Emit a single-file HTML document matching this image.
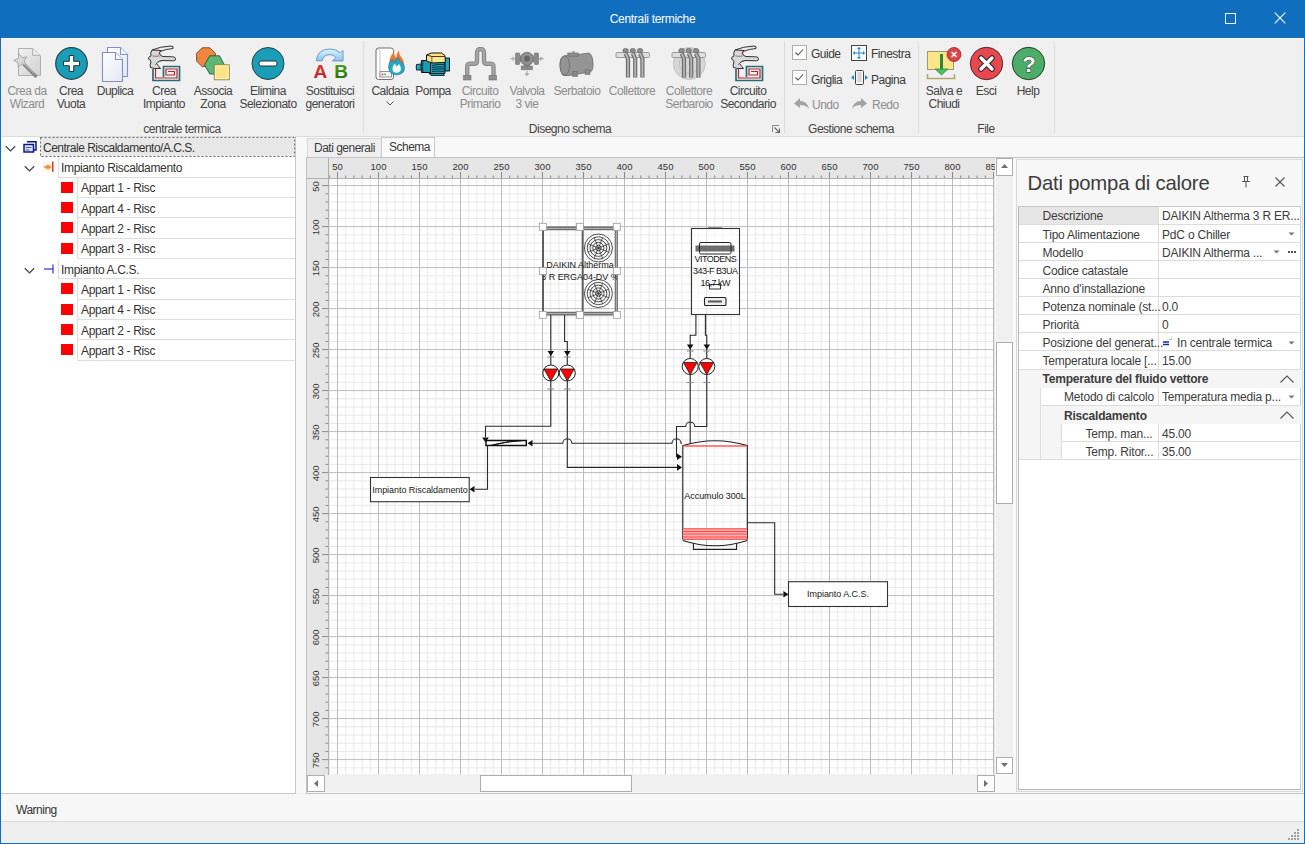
<!DOCTYPE html>
<html><head><meta charset="utf-8">
<style>
*{box-sizing:border-box;margin:0;padding:0}
html,body{width:1305px;height:844px;overflow:hidden;background:#f0f0f0;font-family:"Liberation Sans",sans-serif;font-size:11px;color:#333;position:relative}
.a{position:absolute}
svg{display:block}
.btn{position:absolute;text-align:center;font-size:12px;letter-spacing:-0.5px;line-height:13.4px;color:#444;white-space:nowrap;transform:translateX(-50%)}

.glab{position:absolute;font-size:12px;letter-spacing:-0.5px;line-height:13px;color:#444;transform:translateX(-50%);white-space:nowrap}
.sep{position:absolute;top:41px;width:1px;height:92px;background:#dcdcdc}
.t{position:absolute;white-space:nowrap;font-size:12px;letter-spacing:-0.5px;line-height:13px;color:#3b3b3b}
.dis{color:#8d8d8d !important}
</style></head><body>
<div class="a" style="left:0;top:0;width:1305px;height:38px;background:#0f6ebe"></div>
<div class="t" style="left:0;top:13px;width:1305px;text-align:center;color:#fff;letter-spacing:-0.3px">Centrali termiche</div>
<svg class="a" style="left:1225px;top:13px" width="12" height="11" viewBox="0 0 12 11"><rect x=".5" y=".5" width="10" height="10" fill="none" stroke="#fff" stroke-width="1"/></svg>
<svg class="a" style="left:1274px;top:12px" width="12" height="12" viewBox="0 0 12 12"><path d="M.7 .7l10.6 10.6M11.3 .7L.7 11.3" stroke="#fff" stroke-width="1.1"/></svg>
<div class="a" style="left:0;top:38px;width:1px;height:806px;background:#0f6ebe"></div>
<div class="a" style="left:1304px;top:38px;width:1px;height:806px;background:#0f6ebe"></div>
<div class="a" style="left:0;top:843px;width:1305px;height:1px;background:#0f6ebe"></div>
<!-- RIBBON -->
<div class="a" style="left:1px;top:38px;width:1303px;height:1px;background:#fafafa"></div>
<div class="a" style="left:1px;top:136px;width:1303px;height:1px;background:#dcdcdc"></div>
<div class="sep" style="left:363px"></div>
<div class="sep" style="left:784px"></div>
<div class="sep" style="left:918px"></div>
<div class="sep" style="left:1054px"></div>
<!-- icons group 1 -->
<svg class="a" style="left:11px;top:46px" width="32" height="34" viewBox="0 0 32 34">
 <defs><linearGradient id="gw" x1="0" y1="0" x2="1" y2="1"><stop offset="0" stop-color="#f2f2f2"/><stop offset="1" stop-color="#d0d0d0"/></linearGradient>
 <linearGradient id="gs" x1="0" y1="0" x2="1" y2="1"><stop offset="0" stop-color="#f0f0f0"/><stop offset="1" stop-color="#c4c4c4"/></linearGradient></defs>
 <path d="M7.5 2.5h14.5l7.5 7.5v19.5h-22z" fill="url(#gw)" stroke="#b0b0b0"/>
 <path d="M21.5 2.5v6.8h7.5" fill="#ececec" stroke="#b0b0b0"/>
 <path d="M13 18.5L24.5 30" stroke="#888" stroke-width="3.2" stroke-linecap="round"/>
 <path d="M14 18.5L23 27.5" stroke="#c8c8c8" stroke-width="1"/>
 <path d="M7.94 7.85L10.98 11.72L15.84 10.88L13.10 14.97L15.40 19.33L10.65 17.99L7.22 21.52L7.03 16.60L2.61 14.42L7.24 12.72z" fill="url(#gs)" stroke="#a8a8a8" stroke-width="1" stroke-linejoin="round"/>
</svg>
<svg class="a" style="left:55px;top:47px" width="33" height="33" viewBox="0 0 33 33">
 <circle cx="16.5" cy="16.5" r="15.8" fill="#1a9eb8" stroke="#25454b" stroke-width="1.2"/>
 <path d="M14.3 8.5h4.4v5.8h5.8v4.4h-5.8v5.8h-4.4v-5.8h-5.8v-4.4h5.8z" fill="#fff" stroke="#2b2f30" stroke-width="1"/>
</svg>
<svg class="a" style="left:96px;top:44px" width="40" height="38" viewBox="0 0 40 38">
 <defs><linearGradient id="gd" x1="0" y1="0" x2="1" y2="1"><stop offset="0" stop-color="#ffffff"/><stop offset="1" stop-color="#e2e7f3"/></linearGradient></defs>
 <path d="M11.5 3.5h13l7 7v22h-20z" fill="url(#gd)" stroke="#8690c0" stroke-width="1.1"/>
 <path d="M24.5 3.5v7h7" fill="#fafbff" stroke="#8690c0" stroke-width="1.1"/>
 <path d="M6.5 8.5h13l7 7v22h-20z" fill="url(#gd)" stroke="#8690c0" stroke-width="1.1"/>
 <path d="M19.5 8.5v7h7" fill="#fafbff" stroke="#8690c0" stroke-width="1.1"/>
</svg>
<svg class="a" style="left:145px;top:44px" width="40" height="40" viewBox="0 0 40 40">
 <path d="M7 6Q15 2.5 26 2Q29 2 28 4.5Q21 5 15 7.5" fill="#ececec" stroke="#1e1e1e" stroke-width="0.9"/>
 <path d="M7 6Q5 9 6 12Q3 13 3.5 15Q6 16 6 18Q4.5 21 5.5 23.5Q9 25 15.5 24.5Q13 21.5 11.5 19.5Q13 17 17 16.5L28.5 16.8Q31 16.5 30.5 14.5Q30 12.5 27.5 12.8L18 12.5Q15 12 14.5 9.5Q14.5 7.5 16 6.5Z" fill="#d9d9d9" stroke="#1e1e1e" stroke-width="0.9"/>
 <path d="M7.5 12Q11 12.5 14.5 12M10 21Q12 17.5 17 16.5" fill="none" stroke="#555" stroke-width="0.7"/>
 <circle cx="14.5" cy="9.5" r="0.9" fill="#d22"/>
 <path d="M8 25V36.5H34.5V22.5H18.5V33" fill="none" stroke="#2a6b78" stroke-width="1.7"/>
 <path d="M10.5 25V34H32V25H21V31H29.5V27.5H23" fill="none" stroke="#b0282e" stroke-width="1.2"/>
</svg>
<svg class="a" style="left:190px;top:44px" width="45" height="40" viewBox="0 0 45 40">
 <polygon points="25.42,17.10 19.90,22.62 12.10,22.62 6.58,17.10 6.58,9.30 12.10,3.78 19.90,3.78 25.42,9.30" fill="#f08640" stroke="#6a3a20" stroke-width=".8"/>
 <polygon points="19.8,11.8 29.5,11.8 34.3,20.8 29.5,30 19.8,30 14.5,20.8" fill="#5cb874" stroke="#1f5a30" stroke-width=".9"/>
 <rect x="24.3" y="20.8" width="15" height="15" fill="#fbe38a" stroke="#8a8460" stroke-width=".9"/>
 <rect x="25.5" y="22" width="12.6" height="12.6" fill="none" stroke="#fff7b0" stroke-width=".8"/>
</svg>
<svg class="a" style="left:251px;top:47px" width="34" height="34" viewBox="0 0 34 34">
 <circle cx="17" cy="16.5" r="16" fill="#1a9eb8" stroke="#2e3e42" stroke-width="1"/>
 <rect x="8" y="14" width="18" height="5" rx="2" fill="#fff" stroke="#2b2f30" stroke-width="1"/>
</svg>
<svg class="a" style="left:308px;top:44px" width="44" height="38" viewBox="0 0 44 38">
 <defs><linearGradient id="garr" x1="0" y1="0" x2="0" y2="1"><stop offset="0" stop-color="#def3fc"/><stop offset="1" stop-color="#8cc4ec"/></linearGradient>
 <linearGradient id="gA" x1="0" y1="0" x2="0" y2="1"><stop offset="0" stop-color="#e0463c"/><stop offset="1" stop-color="#b81c18"/></linearGradient>
 <linearGradient id="gB" x1="0" y1="0" x2="0" y2="1"><stop offset="0" stop-color="#56a818"/><stop offset="1" stop-color="#1e6a0a"/></linearGradient></defs>
 <path d="M8.3 16.8Q9.5 5 22 5Q28.5 5 32.3 8.8L35 6.5V17H24.5L27.8 13.6Q25.5 10.6 22 10.6Q15.5 10.6 14 16.8Z" fill="url(#garr)" stroke="#5b93d0" stroke-width=".9"/>
 <text x="12.3" y="33.5" text-anchor="middle" font-family="Liberation Sans" font-weight="bold" font-size="19" fill="url(#gA)">A</text>
 <text x="33" y="33.5" text-anchor="middle" font-family="Liberation Sans" font-weight="bold" font-size="19" fill="url(#gB)">B</text>
</svg>
<!-- labels group 1 -->
<div class="btn dis" style="left:27px;top:85px">Crea da<br>Wizard</div>
<div class="btn" style="left:71px;top:85px">Crea<br>Vuota</div>
<div class="btn" style="left:115px;top:85px">Duplica</div>
<div class="btn" style="left:164px;top:85px">Crea<br>Impianto</div>
<div class="btn" style="left:213px;top:85px">Associa<br>Zona</div>
<div class="btn" style="left:268px;top:85px">Elimina<br>Selezionato</div>
<div class="btn" style="left:330px;top:85px">Sostituisci<br>generatori</div>
<div class="glab" style="left:182px;top:122.6px">centrale termica</div>
<!-- group 2 icons -->
<svg class="a" style="left:372px;top:46px" width="34" height="36" viewBox="0 0 34 36">
 <path d="M4 4.5Q4 2 6.5 2H19Q21.5 2.3 21.5 4.5V31Q21.5 33.5 19 33.5H6.5Q4 33.5 4 31Z" fill="#fff" stroke="#707070" stroke-width="1"/>
 <path d="M5.5 3.5Q7 3 8 4.5V32" fill="none" stroke="#c8c8c8" stroke-width="1"/>
 <rect x="8" y="25.5" width="11.5" height="5.5" fill="#f2f2f2" stroke="#888" stroke-width=".9"/>
 <circle cx="10.5" cy="28.3" r=".9" fill="#e33"/><circle cx="13" cy="28.3" r=".9" fill="#3a3"/>
 <path d="M17.5 17Q17 11 22 6Q22 10 24.5 12Q24 8 27 4.5Q27 9 30 12Q32.5 15 32 19Q28 18 24 19Q20 18 17.5 17Z" fill="#f0772e"/>
 <path d="M16.5 21Q16.5 15.5 20.5 13Q21 16 23 17Q23 13.5 26 11Q27 15 29.5 16Q32.5 18 32.5 22.5Q32.5 28 24.5 29Q16.5 28 16.5 21Z" fill="#23a9c4" stroke="#1a6a7a" stroke-width=".5"/>
 <path d="M20.5 23Q20.5 19.5 23 17.5Q23.5 20 25 20.5Q25.5 19 27 18Q29 20.5 28.8 23.5Q28.5 26.5 24.5 26.8Q20.5 26.5 20.5 23Z" fill="#fff"/>
</svg>
<svg class="a" style="left:412px;top:48px" width="40" height="32" viewBox="0 0 40 32">
 <path d="M4.5 16.5Q4 19 4.5 22H9.5V16Z" fill="#1fa6c0" stroke="#111" stroke-width=".9"/>
 <path d="M9.5 12.5Q8.5 18.5 9.5 24.5H18.5V12.5Z" fill="#1c9db6" stroke="#111" stroke-width="1"/>
 <path d="M11 13Q10 18.5 11 24" fill="none" stroke="#0a3a44" stroke-width="1"/>
 <path d="M18.5 14.5H33V25.5H18.5Z" fill="#1e9fb8" stroke="#111" stroke-width="1"/>
 <path d="M20 17.5Q26 16 32 16.5M20 19.5Q26 18.5 32 19M20 21.5Q26 20.5 32 21M20 23.5Q26 22.5 32 23.5" fill="none" stroke="#0a3440" stroke-width="1"/>
 <path d="M33 10H37.5V23H33Z" fill="#1fa6c0" stroke="#111" stroke-width="1"/>
 <path d="M17 25.5L19 27.5H32.5L31 25.5Z" fill="#1c9db6" stroke="#111" stroke-width=".8"/>
 <path d="M14.5 7L19.5 5H29.5L33 7.5V14.5L20 15L14.5 13Z" fill="#fde283" stroke="#111" stroke-width="1"/>
 <path d="M14.5 7L20 8.5H33M20 8.5V15" fill="none" stroke="#111" stroke-width=".8"/>
 <path d="M20.5 9.5H32.5V14H20.5Z" fill="#fbe58d"/>
</svg>
<svg class="a" style="left:463px;top:47px" width="34" height="34" viewBox="0 0 34 34">
 <path d="M4.2 30V19.5c0-1.5 1-2.8 2.5-2.8H11.5c1.5 0 2.5-1 2.5-2.5V6c0-2.5 1.5-4 3.5-4s3.5 1.5 3.5 4v8.2c0 1.5 1 2.5 2.5 2.5h4.5c1.5 0 2.5 1.3 2.5 2.8v10.5" fill="none" stroke="#8a8a8a" stroke-width="4.4"/>
 <path d="M4.2 30V19.5c0-1.5 1-2.8 2.5-2.8H11.5c1.5 0 2.5-1 2.5-2.5V6c0-2.5 1.5-4 3.5-4s3.5 1.5 3.5 4v8.2c0 1.5 1 2.5 2.5 2.5h4.5c1.5 0 2.5 1.3 2.5 2.8v10.5" fill="none" stroke="#a6a6a6" stroke-width="2.2"/>
 <rect x=".5" y="28.5" width="7.5" height="4.5" fill="#8e8e8e" stroke="#6e6e6e" stroke-width=".6"/><rect x="26" y="28.5" width="7.5" height="4.5" fill="#8e8e8e" stroke="#6e6e6e" stroke-width=".6"/>
</svg>
<svg class="a" style="left:507px;top:44px" width="40" height="40" viewBox="0 0 40 40">
 <path d="M3 14.8h4M5.5 13l1.8 1.8-1.8 1.8M37 14.8h-4M34.5 13l-1.8 1.8 1.8 1.8M20 27v4M18.2 29.5l1.8 1.8 1.8-1.8" fill="none" stroke="#a6a6a6" stroke-width="1.1"/>
 <rect x="8.5" y="9" width="4.2" height="11.5" rx=".8" fill="#8a8a8a" stroke="#747474" stroke-width=".6"/>
 <rect x="27.3" y="9" width="4.2" height="11.5" rx=".8" fill="#8a8a8a" stroke="#747474" stroke-width=".6"/>
 <path d="M12.5 11.5h15v6.5h-15z" fill="#8a8a8a"/>
 <path d="M17 20.5h6v2h-6z" fill="#8a8a8a"/>
 <rect x="14.2" y="22" width="11.2" height="3.8" fill="#8a8a8a" stroke="#747474" stroke-width=".6"/>
 <circle cx="20" cy="14.8" r="6.6" fill="#8c8c8c" stroke="#747474" stroke-width=".8"/>
 <circle cx="20" cy="14.8" r="4.4" fill="none" stroke="#9a9a9a" stroke-width=".8"/>
 <circle cx="20" cy="14.8" r="3" fill="#666"/>
</svg>
<svg class="a" style="left:556px;top:46px" width="40" height="36" viewBox="0 0 40 36">
 <path d="M8 10Q11 9 13 9.5L22.5 8.5L33 7Q37 9 37 19Q37 25 34 26L25 27.5L13 29.5Q8 30 6.5 29Q4 25 4 19Q4 11 8 10Z" fill="#959595" stroke="#6a6a6a" stroke-width=".8"/>
 <ellipse cx="8.8" cy="19.5" rx="4.8" ry="9.5" fill="#939393" stroke="#6a6a6a" stroke-width=".8"/>
 <path d="M11.5 7H22.5V10.3H12.5Z" fill="#8e8e8e" stroke="#6a6a6a" stroke-width=".6"/><path d="M15.5 6.5L18 5L19 6.5" fill="#666"/>
 <path d="M16.5 25.5H21.5V30.5H16.5ZM29 23.5H34V28.5H29Z" fill="#8a8a8a" stroke="#6e6e6e" stroke-width=".6"/>
</svg>
<svg class="a" style="left:612px;top:46px" width="40" height="36" viewBox="0 0 40 36">
 <rect x="4" y="6.5" width="33.5" height="5" rx="1" fill="#dedede" stroke="#9a9a9a"/>
 <path d="M13.6 7.5L16.0 12.5V31.5" fill="none" stroke="#6e6e6e" stroke-width="4.2"/><path d="M13.6 7.5L16.0 12.5V31" fill="none" stroke="#b4b4b4" stroke-width="1.8"/>
 <ellipse cx="13.6" cy="4.6" rx="2.7" ry="2.2" fill="#8d8d8d" stroke="#666" stroke-width=".7"/>
 <path d="M20.8 7.5L23.2 12.5V31.5" fill="none" stroke="#6e6e6e" stroke-width="4.2"/><path d="M20.8 7.5L23.2 12.5V31" fill="none" stroke="#b4b4b4" stroke-width="1.8"/>
 <ellipse cx="20.8" cy="4.6" rx="2.7" ry="2.2" fill="#8d8d8d" stroke="#666" stroke-width=".7"/>
 <path d="M28 7.5L30.4 12.5V31.5" fill="none" stroke="#6e6e6e" stroke-width="4.2"/><path d="M28 7.5L30.4 12.5V31" fill="none" stroke="#b4b4b4" stroke-width="1.8"/>
 <ellipse cx="28" cy="4.6" rx="2.7" ry="2.2" fill="#8d8d8d" stroke="#666" stroke-width=".7"/>
</svg>
<svg class="a" style="left:668px;top:46px" width="40" height="36" viewBox="0 0 40 36">
 <circle cx="21.3" cy="17.5" r="16" fill="#d6d6d6" stroke="#c4c4c4"/><circle cx="21.3" cy="17.5" r="10" fill="none" stroke="#c0c0c0"/>
 <rect x="4" y="6.5" width="33.5" height="5" rx="1" fill="#dedede" stroke="#9a9a9a"/>
 <path d="M13.6 7.5L16.0 12.5V31.5" fill="none" stroke="#6e6e6e" stroke-width="4.2"/><path d="M13.6 7.5L16.0 12.5V31" fill="none" stroke="#b4b4b4" stroke-width="1.8"/>
 <ellipse cx="13.6" cy="4.6" rx="2.7" ry="2.2" fill="#8d8d8d" stroke="#666" stroke-width=".7"/>
 <path d="M20.8 7.5L23.2 12.5V31.5" fill="none" stroke="#6e6e6e" stroke-width="4.2"/><path d="M20.8 7.5L23.2 12.5V31" fill="none" stroke="#b4b4b4" stroke-width="1.8"/>
 <ellipse cx="20.8" cy="4.6" rx="2.7" ry="2.2" fill="#8d8d8d" stroke="#666" stroke-width=".7"/>
 <path d="M28 7.5L30.4 12.5V31.5" fill="none" stroke="#6e6e6e" stroke-width="4.2"/><path d="M28 7.5L30.4 12.5V31" fill="none" stroke="#b4b4b4" stroke-width="1.8"/>
 <ellipse cx="28" cy="4.6" rx="2.7" ry="2.2" fill="#8d8d8d" stroke="#666" stroke-width=".7"/>
</svg>
<svg class="a" style="left:728px;top:44px" width="40" height="40" viewBox="0 0 40 40">
 <path d="M7 6Q15 2.5 26 2Q29 2 28 4.5Q21 5 15 7.5" fill="#ececec" stroke="#1e1e1e" stroke-width="0.9"/>
 <path d="M7 6Q5 9 6 12Q3 13 3.5 15Q6 16 6 18Q4.5 21 5.5 23.5Q9 25 15.5 24.5Q13 21.5 11.5 19.5Q13 17 17 16.5L28.5 16.8Q31 16.5 30.5 14.5Q30 12.5 27.5 12.8L18 12.5Q15 12 14.5 9.5Q14.5 7.5 16 6.5Z" fill="#d9d9d9" stroke="#1e1e1e" stroke-width="0.9"/>
 <path d="M7.5 12Q11 12.5 14.5 12M10 21Q12 17.5 17 16.5" fill="none" stroke="#555" stroke-width="0.7"/>
 <circle cx="14.5" cy="9.5" r="0.9" fill="#d22"/>
 <path d="M8 25V36.5H34.5V22.5H18.5V33" fill="none" stroke="#2a6b78" stroke-width="1.7"/>
 <path d="M10.5 25V34H32V25H21V31H29.5V27.5H23" fill="none" stroke="#b0282e" stroke-width="1.2"/>
</svg>
<div class="btn" style="left:390px;top:85px">Caldaia</div>
<svg class="a" style="left:386px;top:100.5px" width="8" height="5" viewBox="0 0 8 5"><path d="M.5.5l3.5 3.5 3.5-3.5" fill="none" stroke="#555" stroke-width="1"/></svg>
<div class="btn" style="left:433px;top:85px">Pompa</div>
<div class="btn dis" style="left:480px;top:85px">Circuito<br>Primario</div>
<div class="btn dis" style="left:527px;top:85px">Valvola<br>3 vie</div>
<div class="btn dis" style="left:577px;top:85px">Serbatoio</div>
<div class="btn dis" style="left:632px;top:85px">Collettore</div>
<div class="btn dis" style="left:689px;top:85px">Collettore<br>Serbaroio</div>
<div class="btn" style="left:748px;top:85px">Circuito<br>Secondario</div>
<div class="glab" style="left:570px;top:122.6px">Disegno schema</div>
<svg class="a" style="left:772px;top:125px" width="8" height="8" viewBox="0 0 8 8"><path d="M.5 7V.5H7" fill="none" stroke="#8a8a8a"/><path d="M2.5 2.5l4.5 4.5M3.5 7.5h4v-4" fill="none" stroke="#666" stroke-width="1.1"/></svg>
<!-- group 3 -->
<svg class="a" style="left:792px;top:45px" width="15" height="15" viewBox="0 0 15 15"><rect x=".5" y=".5" width="14" height="14" fill="#fff" stroke="#adadad"/><path d="M3.5 7.5l2.5 2.5 5-5.5" fill="none" stroke="#555" stroke-width="1.1"/></svg>
<svg class="a" style="left:792px;top:70px" width="15" height="15" viewBox="0 0 15 15"><rect x=".5" y=".5" width="14" height="14" fill="#fff" stroke="#adadad"/><path d="M3.5 7.5l2.5 2.5 5-5.5" fill="none" stroke="#555" stroke-width="1.1"/></svg>
<svg class="a" style="left:794px;top:98px" width="15" height="12" viewBox="0 0 15 12"><path d="M0 5.5L6 0v3c5 0 8 3 9 8-2-3-5-4-9-4v3z" fill="#a3a3a3"/></svg>
<div class="t" style="left:811px;top:47.5px">Guide</div>
<div class="t" style="left:811px;top:73.5px">Griglia</div>
<div class="t dis" style="left:812px;top:98.5px">Undo</div>
<svg class="a" style="left:851px;top:45px" width="16" height="16" viewBox="0 0 16 16"><rect x=".5" y=".5" width="15" height="15" fill="#fafafa" stroke="#444"/>
<path d="M8 2.5v11M2.5 8h11" stroke="#1e88d8" stroke-width="1"/><path d="M8 2l-2 2h4zM8 14l-2-2h4zM2 8l2-2v4zM14 8l-2-2v4z" fill="#1e88d8"/></svg>
<svg class="a" style="left:851px;top:70px" width="17" height="16" viewBox="0 0 17 16"><rect x="4.5" y=".5" width="8" height="14" rx="1" fill="#f4f4f4" stroke="#444"/>
<path d="M6.5 3h4M6.5 5h4M6.5 7h4M6.5 9h4M6.5 11h4" stroke="#aaa" stroke-width=".8"/><path d="M0 7.5l3-2.5v5zM17 7.5l-3-2.5v5z" fill="#1e88d8"/></svg>
<svg class="a" style="left:852px;top:98px" width="15" height="12" viewBox="0 0 15 12"><path d="M15 5.5L9 0v3C4 3 1 6 0 11c2-3 5-4 9-4v3z" fill="#a3a3a3"/></svg>
<div class="t" style="left:871px;top:47.5px">Finestra</div>
<div class="t" style="left:871px;top:73.5px">Pagina</div>
<div class="t dis" style="left:872px;top:98.5px">Redo</div>
<div class="glab" style="left:851px;top:122.6px">Gestione schema</div>
<!-- group 4 -->
<svg class="a" style="left:926px;top:46px" width="36" height="35" viewBox="0 0 36 35">
 <rect x="1.5" y="5.5" width="26" height="18" fill="#fde68a" stroke="#9a9a6a"/>
 <path d="M1.5 28v4.5h27V28" fill="none" stroke="#b0a870" stroke-width="1.6"/>
 <rect x="14" y="8" width="3" height="17" fill="#2e8a3a"/>
 <path d="M9 23h13l-6.5 6z" fill="#4cc06a" stroke="#2e8a3a" stroke-width=".8"/>
 <circle cx="28" cy="8.5" r="7" fill="#e0434a" stroke="#8a2a2a" stroke-width=".8"/>
 <path d="M25.5 6l5 5M30.5 6l-5 5" stroke="#fff" stroke-width="1.6"/>
</svg>
<svg class="a" style="left:969px;top:46px" width="35" height="35" viewBox="0 0 35 35">
 <circle cx="17.5" cy="17.5" r="16.2" fill="#e8474f" stroke="#4a2a2a" stroke-width="1"/>
 <path d="M12 12l11 11M23 12L12 23" stroke="#2a2a2a" stroke-width="5.6" stroke-linecap="round"/>
 <path d="M12 12l11 11M23 12L12 23" stroke="#fff" stroke-width="3.4" stroke-linecap="round"/>
</svg>
<svg class="a" style="left:1011px;top:46px" width="35" height="35" viewBox="0 0 35 35">
 <circle cx="17.5" cy="17.5" r="16.2" fill="#4cad69" stroke="#2a3a2a" stroke-width="1"/>
 <text x="18" y="26" text-anchor="middle" font-family="Liberation Sans" font-weight="bold" font-size="22" fill="#fff" stroke="#333" stroke-width="1" paint-order="stroke">?</text>
</svg>
<div class="btn" style="left:944px;top:85px">Salva e<br>Chiudi</div>
<div class="btn" style="left:986px;top:85px">Esci</div>
<div class="btn" style="left:1028px;top:85px">Help</div>
<div class="glab" style="left:986px;top:122.6px">File</div>
<!-- TREE -->
<div class="a" style="left:1px;top:137px;width:294px;height:656px;background:#fff"></div>
<div class="a" style="left:295px;top:137px;width:1px;height:657px;background:#c8c8c8"></div>
<div class="a" style="left:1px;top:793px;width:295px;height:1px;background:#c8c8c8"></div>
<svg class="a" style="left:40px;top:137px" width="255" height="20" viewBox="0 0 255 20"><rect x=".5" y=".5" width="254" height="19" fill="#e8e8e8" stroke="#6a6a6a" stroke-width="1" stroke-dasharray="2 2"/></svg>
<svg class="a" style="left:5px;top:144.5px" width="11" height="8" viewBox="0 0 11 8"><path d="M.8 1.2l4.7 4.7 4.7-4.7" fill="none" stroke="#444" stroke-width="1.3"/></svg>
<svg class="a" style="left:23px;top:141px" width="14" height="13" viewBox="0 0 14 13"><path d="M4 .8h9v8.2h-2" fill="none" stroke="#0c1a80" stroke-width="1.5"/><rect x="1" y="3.5" width="9.5" height="7.5" fill="#dfe8f8" stroke="#0c1a80" stroke-width="1.5"/><path d="M2.5 6.5h6M2.5 9h4" stroke="#3a5ab8" stroke-width="1.2"/></svg>
<div class="t" style="left:43px;top:141.5px;color:#333;letter-spacing:-0.5px">Centrale Riscaldamento/A.C.S.</div>
<div class="a" style="left:58px;top:176.7px;width:237px;height:1px;background:#dedede"></div>
<div class="a" style="left:58px;top:157.3px;width:1px;height:20.33px;background:#dedede"></div>
<svg class="a" style="left:24px;top:164.8px" width="11" height="8" viewBox="0 0 11 8"><path d="M.8 1.2l4.7 4.7 4.7-4.7" fill="none" stroke="#444" stroke-width="1.3"/></svg>
<svg class="a" style="left:43px;top:161.3px" width="12" height="12" viewBox="0 0 12 12"><circle cx="5" cy="6" r="2.6" fill="#f7b52a"/><path d="M5 1.5v1M5 9.5v1M1 3l.8.8M9 3l-.8.8M1 9l.8-.8M9 9l-.8-.8" stroke="#f5c060" stroke-width=".8"/><path d="M.5 6h8" stroke="#f06060" stroke-width="1"/><path d="M9.8 .5v10.5" stroke="#f01010" stroke-width="1.3"/></svg>
<div class="t" style="left:61px;top:161.8px;color:#333;letter-spacing:-0.35px">Impianto Riscaldamento</div>
<div class="a" style="left:77px;top:197.0px;width:218px;height:1px;background:#dedede"></div>
<div class="a" style="left:77px;top:177.7px;width:1px;height:20.33px;background:#dedede"></div>
<div class="a" style="left:61px;top:181.7px;width:12px;height:11px;background:#ff0000"></div>
<div class="t" style="left:81px;top:182.2px;color:#333;letter-spacing:-0.35px">Appart 1 - Risc</div>
<div class="a" style="left:77px;top:217.3px;width:218px;height:1px;background:#dedede"></div>
<div class="a" style="left:77px;top:198.0px;width:1px;height:20.33px;background:#dedede"></div>
<div class="a" style="left:61px;top:202.0px;width:12px;height:11px;background:#ff0000"></div>
<div class="t" style="left:81px;top:202.5px;color:#333;letter-spacing:-0.35px">Appart 4 - Risc</div>
<div class="a" style="left:77px;top:237.6px;width:218px;height:1px;background:#dedede"></div>
<div class="a" style="left:77px;top:218.3px;width:1px;height:20.33px;background:#dedede"></div>
<div class="a" style="left:61px;top:222.3px;width:12px;height:11px;background:#ff0000"></div>
<div class="t" style="left:81px;top:222.8px;color:#333;letter-spacing:-0.35px">Appart 2 - Risc</div>
<div class="a" style="left:77px;top:258.0px;width:218px;height:1px;background:#dedede"></div>
<div class="a" style="left:77px;top:238.6px;width:1px;height:20.33px;background:#dedede"></div>
<div class="a" style="left:61px;top:242.6px;width:12px;height:11px;background:#ff0000"></div>
<div class="t" style="left:81px;top:243.1px;color:#333;letter-spacing:-0.35px">Appart 3 - Risc</div>
<div class="a" style="left:58px;top:278.3px;width:237px;height:1px;background:#dedede"></div>
<div class="a" style="left:58px;top:259.0px;width:1px;height:20.33px;background:#dedede"></div>
<svg class="a" style="left:24px;top:266.5px" width="11" height="8" viewBox="0 0 11 8"><path d="M.8 1.2l4.7 4.7 4.7-4.7" fill="none" stroke="#444" stroke-width="1.3"/></svg>
<svg class="a" style="left:43px;top:263.0px" width="12" height="12" viewBox="0 0 12 12"><path d="M1 6h9" stroke="#3030e0" stroke-width="1.2"/><path d="M10 1.5v9" stroke="#3030e0" stroke-width="1.2"/></svg>
<div class="t" style="left:61px;top:263.5px;color:#333;letter-spacing:-0.35px">Impianto A.C.S.</div>
<div class="a" style="left:77px;top:298.6px;width:218px;height:1px;background:#dedede"></div>
<div class="a" style="left:77px;top:279.3px;width:1px;height:20.33px;background:#dedede"></div>
<div class="a" style="left:61px;top:283.3px;width:12px;height:11px;background:#ff0000"></div>
<div class="t" style="left:81px;top:283.8px;color:#333;letter-spacing:-0.35px">Appart 1 - Risc</div>
<div class="a" style="left:77px;top:319.0px;width:218px;height:1px;background:#dedede"></div>
<div class="a" style="left:77px;top:299.6px;width:1px;height:20.33px;background:#dedede"></div>
<div class="a" style="left:61px;top:303.6px;width:12px;height:11px;background:#ff0000"></div>
<div class="t" style="left:81px;top:304.1px;color:#333;letter-spacing:-0.35px">Appart 4 - Risc</div>
<div class="a" style="left:77px;top:339.3px;width:218px;height:1px;background:#dedede"></div>
<div class="a" style="left:77px;top:320.0px;width:1px;height:20.33px;background:#dedede"></div>
<div class="a" style="left:61px;top:324.0px;width:12px;height:11px;background:#ff0000"></div>
<div class="t" style="left:81px;top:324.5px;color:#333;letter-spacing:-0.35px">Appart 2 - Risc</div>
<div class="a" style="left:77px;top:359.6px;width:218px;height:1px;background:#dedede"></div>
<div class="a" style="left:77px;top:340.3px;width:1px;height:20.33px;background:#dedede"></div>
<div class="a" style="left:61px;top:344.3px;width:12px;height:11px;background:#ff0000"></div>
<div class="t" style="left:81px;top:344.8px;color:#333;letter-spacing:-0.35px">Appart 3 - Risc</div>
<!-- MID -->
<div class="a" style="left:296px;top:137px;width:1008px;height:656px;background:#f8f8f8"></div>
<div class="a" style="left:307px;top:138px;width:75px;height:20px;background:#efefef;border:1px solid #d9d9d9;border-bottom:none"></div>
<div class="t" style="left:314px;top:142px;color:#3b3b3b">Dati generali</div>
<div class="a" style="left:381px;top:137px;width:54px;height:21px;background:#fafafa;border:1px solid #c9c9c9;border-bottom:none"></div>
<div class="t" style="left:389px;top:141px;color:#3b3b3b">Schema</div>
<div class="a" style="left:306px;top:157px;width:998px;height:637px;border:1px solid #c4c4c4;border-right:none;background:#f8f8f8"></div>
<div class="a" style="left:996px;top:176px;width:17px;height:581px;background:#f0f0f0"></div>
<div class="a" style="left:307px;top:775px;width:688px;height:17px;background:#f0f0f0"></div>
<svg class="a" style="left:307px;top:158px" width="688" height="617" viewBox="307 158 688 617">
<rect x="307" y="158" width="688" height="617" fill="#e6e6e6"/>
<rect x="328.5" y="178.5" width="665.5" height="596.0" fill="#fff"/>
<path d="M329.30 178.5V774.5M345.70 178.5V774.5M353.90 178.5V774.5M362.10 178.5V774.5M370.30 178.5V774.5M386.70 178.5V774.5M394.90 178.5V774.5M403.10 178.5V774.5M411.30 178.5V774.5M427.70 178.5V774.5M435.90 178.5V774.5M444.10 178.5V774.5M452.30 178.5V774.5M468.70 178.5V774.5M476.90 178.5V774.5M485.10 178.5V774.5M493.30 178.5V774.5M509.70 178.5V774.5M517.90 178.5V774.5M526.10 178.5V774.5M534.30 178.5V774.5M550.70 178.5V774.5M558.90 178.5V774.5M567.10 178.5V774.5M575.30 178.5V774.5M591.70 178.5V774.5M599.90 178.5V774.5M608.10 178.5V774.5M616.30 178.5V774.5M632.70 178.5V774.5M640.90 178.5V774.5M649.10 178.5V774.5M657.30 178.5V774.5M673.70 178.5V774.5M681.90 178.5V774.5M690.10 178.5V774.5M698.30 178.5V774.5M714.70 178.5V774.5M722.90 178.5V774.5M731.10 178.5V774.5M739.30 178.5V774.5M755.70 178.5V774.5M763.90 178.5V774.5M772.10 178.5V774.5M780.30 178.5V774.5M796.70 178.5V774.5M804.90 178.5V774.5M813.10 178.5V774.5M821.30 178.5V774.5M837.70 178.5V774.5M845.90 178.5V774.5M854.10 178.5V774.5M862.30 178.5V774.5M878.70 178.5V774.5M886.90 178.5V774.5M895.10 178.5V774.5M903.30 178.5V774.5M919.70 178.5V774.5M927.90 178.5V774.5M936.10 178.5V774.5M944.30 178.5V774.5M960.70 178.5V774.5M968.90 178.5V774.5M977.10 178.5V774.5M985.30 178.5V774.5M328.5 193.80H994M328.5 202.00H994M328.5 210.20H994M328.5 218.40H994M328.5 234.80H994M328.5 243.00H994M328.5 251.20H994M328.5 259.40H994M328.5 275.80H994M328.5 284.00H994M328.5 292.20H994M328.5 300.40H994M328.5 316.80H994M328.5 325.00H994M328.5 333.20H994M328.5 341.40H994M328.5 357.80H994M328.5 366.00H994M328.5 374.20H994M328.5 382.40H994M328.5 398.80H994M328.5 407.00H994M328.5 415.20H994M328.5 423.40H994M328.5 439.80H994M328.5 448.00H994M328.5 456.20H994M328.5 464.40H994M328.5 480.80H994M328.5 489.00H994M328.5 497.20H994M328.5 505.40H994M328.5 521.80H994M328.5 530.00H994M328.5 538.20H994M328.5 546.40H994M328.5 562.80H994M328.5 571.00H994M328.5 579.20H994M328.5 587.40H994M328.5 603.80H994M328.5 612.00H994M328.5 620.20H994M328.5 628.40H994M328.5 644.80H994M328.5 653.00H994M328.5 661.20H994M328.5 669.40H994M328.5 685.80H994M328.5 694.00H994M328.5 702.20H994M328.5 710.40H994M328.5 726.80H994M328.5 735.00H994M328.5 743.20H994M328.5 751.40H994M328.5 767.80H994" stroke="#e8e8e8" stroke-width="1" fill="none"/>
<path d="M337.50 178.5V774.5M378.50 178.5V774.5M419.50 178.5V774.5M460.50 178.5V774.5M501.50 178.5V774.5M542.50 178.5V774.5M583.50 178.5V774.5M624.50 178.5V774.5M665.50 178.5V774.5M706.50 178.5V774.5M747.50 178.5V774.5M788.50 178.5V774.5M829.50 178.5V774.5M870.50 178.5V774.5M911.50 178.5V774.5M952.50 178.5V774.5M993.50 178.5V774.5M328.5 185.60H994M328.5 226.60H994M328.5 267.60H994M328.5 308.60H994M328.5 349.60H994M328.5 390.60H994M328.5 431.60H994M328.5 472.60H994M328.5 513.60H994M328.5 554.60H994M328.5 595.60H994M328.5 636.60H994M328.5 677.60H994M328.5 718.60H994M328.5 759.60H994" stroke="#bcbcbc" stroke-width="1" fill="none"/>
<path d="M329.30 175.5V178M337.50 172V178M345.70 175.5V178M353.90 175.5V178M362.10 175.5V178M370.30 175.5V178M378.50 172V178M386.70 175.5V178M394.90 175.5V178M403.10 175.5V178M411.30 175.5V178M419.50 172V178M427.70 175.5V178M435.90 175.5V178M444.10 175.5V178M452.30 175.5V178M460.50 172V178M468.70 175.5V178M476.90 175.5V178M485.10 175.5V178M493.30 175.5V178M501.50 172V178M509.70 175.5V178M517.90 175.5V178M526.10 175.5V178M534.30 175.5V178M542.50 172V178M550.70 175.5V178M558.90 175.5V178M567.10 175.5V178M575.30 175.5V178M583.50 172V178M591.70 175.5V178M599.90 175.5V178M608.10 175.5V178M616.30 175.5V178M624.50 172V178M632.70 175.5V178M640.90 175.5V178M649.10 175.5V178M657.30 175.5V178M665.50 172V178M673.70 175.5V178M681.90 175.5V178M690.10 175.5V178M698.30 175.5V178M706.50 172V178M714.70 175.5V178M722.90 175.5V178M731.10 175.5V178M739.30 175.5V178M747.50 172V178M755.70 175.5V178M763.90 175.5V178M772.10 175.5V178M780.30 175.5V178M788.50 172V178M796.70 175.5V178M804.90 175.5V178M813.10 175.5V178M821.30 175.5V178M829.50 172V178M837.70 175.5V178M845.90 175.5V178M854.10 175.5V178M862.30 175.5V178M870.50 172V178M878.70 175.5V178M886.90 175.5V178M895.10 175.5V178M903.30 175.5V178M911.50 172V178M919.70 175.5V178M927.90 175.5V178M936.10 175.5V178M944.30 175.5V178M952.50 172V178M960.70 175.5V178M968.90 175.5V178M977.10 175.5V178M985.30 175.5V178M993.50 172V178M322 185.60H328M325.5 193.80H328M325.5 202.00H328M325.5 210.20H328M325.5 218.40H328M322 226.60H328M325.5 234.80H328M325.5 243.00H328M325.5 251.20H328M325.5 259.40H328M322 267.60H328M325.5 275.80H328M325.5 284.00H328M325.5 292.20H328M325.5 300.40H328M322 308.60H328M325.5 316.80H328M325.5 325.00H328M325.5 333.20H328M325.5 341.40H328M322 349.60H328M325.5 357.80H328M325.5 366.00H328M325.5 374.20H328M325.5 382.40H328M322 390.60H328M325.5 398.80H328M325.5 407.00H328M325.5 415.20H328M325.5 423.40H328M322 431.60H328M325.5 439.80H328M325.5 448.00H328M325.5 456.20H328M325.5 464.40H328M322 472.60H328M325.5 480.80H328M325.5 489.00H328M325.5 497.20H328M325.5 505.40H328M322 513.60H328M325.5 521.80H328M325.5 530.00H328M325.5 538.20H328M325.5 546.40H328M322 554.60H328M325.5 562.80H328M325.5 571.00H328M325.5 579.20H328M325.5 587.40H328M322 595.60H328M325.5 603.80H328M325.5 612.00H328M325.5 620.20H328M325.5 628.40H328M322 636.60H328M325.5 644.80H328M325.5 653.00H328M325.5 661.20H328M325.5 669.40H328M322 677.60H328M325.5 685.80H328M325.5 694.00H328M325.5 702.20H328M325.5 710.40H328M322 718.60H328M325.5 726.80H328M325.5 735.00H328M325.5 743.20H328M325.5 751.40H328M322 759.60H328M325.5 767.80H328" stroke="#8a8a8a" stroke-width="1" fill="none"/>
<path d="M307 178.5H994M328.5 158V775" stroke="#b0b0b0" stroke-width="1"/>
<g font-family="Liberation Sans" font-size="9.5" fill="#333"><text x="337.50" y="170" text-anchor="middle">50</text><text x="378.50" y="170" text-anchor="middle">100</text><text x="419.50" y="170" text-anchor="middle">150</text><text x="460.50" y="170" text-anchor="middle">200</text><text x="501.50" y="170" text-anchor="middle">250</text><text x="542.50" y="170" text-anchor="middle">300</text><text x="583.50" y="170" text-anchor="middle">350</text><text x="624.50" y="170" text-anchor="middle">400</text><text x="665.50" y="170" text-anchor="middle">450</text><text x="706.50" y="170" text-anchor="middle">500</text><text x="747.50" y="170" text-anchor="middle">550</text><text x="788.50" y="170" text-anchor="middle">600</text><text x="829.50" y="170" text-anchor="middle">650</text><text x="870.50" y="170" text-anchor="middle">700</text><text x="911.50" y="170" text-anchor="middle">750</text><text x="952.50" y="170" text-anchor="middle">800</text><text x="993.50" y="170" text-anchor="middle">850</text><text x="0" y="0" transform="translate(319.2 186.40) rotate(-90)" text-anchor="middle">50</text><text x="0" y="0" transform="translate(319.2 227.40) rotate(-90)" text-anchor="middle">100</text><text x="0" y="0" transform="translate(319.2 268.40) rotate(-90)" text-anchor="middle">150</text><text x="0" y="0" transform="translate(319.2 309.40) rotate(-90)" text-anchor="middle">200</text><text x="0" y="0" transform="translate(319.2 350.40) rotate(-90)" text-anchor="middle">250</text><text x="0" y="0" transform="translate(319.2 391.40) rotate(-90)" text-anchor="middle">300</text><text x="0" y="0" transform="translate(319.2 432.40) rotate(-90)" text-anchor="middle">350</text><text x="0" y="0" transform="translate(319.2 473.40) rotate(-90)" text-anchor="middle">400</text><text x="0" y="0" transform="translate(319.2 514.40) rotate(-90)" text-anchor="middle">450</text><text x="0" y="0" transform="translate(319.2 555.40) rotate(-90)" text-anchor="middle">500</text><text x="0" y="0" transform="translate(319.2 596.40) rotate(-90)" text-anchor="middle">550</text><text x="0" y="0" transform="translate(319.2 637.40) rotate(-90)" text-anchor="middle">600</text><text x="0" y="0" transform="translate(319.2 678.40) rotate(-90)" text-anchor="middle">650</text><text x="0" y="0" transform="translate(319.2 719.40) rotate(-90)" text-anchor="middle">700</text><text x="0" y="0" transform="translate(319.2 760.40) rotate(-90)" text-anchor="middle">750</text></g>
<!--DIAGRAM-->
<defs><clipPath id="gc"><rect x="328.5" y="178.5" width="665.5" height="596"/></clipPath></defs>
<g clip-path="url(#gc)">
<g fill="none">
<rect x="543" y="227" width="74" height="88" fill="rgba(255,255,255,0)"/>
<path d="M543 228V314" stroke="#5e5e5e" stroke-width="2"/>
<path d="M582.6 228V314" stroke="#5e5e5e" stroke-width="1.8"/>
<path d="M616.3 228V314" stroke="#6a6a6a" stroke-width="3.2"/><path d="M616.3 230V312" stroke="#d0d0d0" stroke-width="0.8"/>
<path d="M543 228.4H617M543 313.6H617" stroke="#6e6e6e" stroke-width="3.6"/><path d="M546 228.4H614M546 313.6H614" stroke="#c8c8c8" stroke-width="0.8"/>
<circle cx="598.4" cy="248" r="14" stroke="#222" stroke-width="0.8"/>
<circle cx="598.4" cy="248" r="11.2" stroke="#222" stroke-width="0.8"/>
<circle cx="598.4" cy="248" r="8.4" stroke="#222" stroke-width="0.8"/>
<circle cx="598.4" cy="248" r="5.6" stroke="#222" stroke-width="0.8"/>
<circle cx="598.4" cy="248" r="2.8" stroke="#222" stroke-width="0.8"/>
<path d="M598.40 248.00L608.75 252.29M598.40 248.00L602.69 258.35M598.40 248.00L594.11 258.35M598.40 248.00L588.05 252.29M598.40 248.00L588.05 243.71M598.40 248.00L594.11 237.65M598.40 248.00L602.69 237.65M598.40 248.00L608.75 243.71" stroke="#222" stroke-width="0.7"/>
<circle cx="598.4" cy="293.5" r="14" stroke="#222" stroke-width="0.8"/>
<circle cx="598.4" cy="293.5" r="11.2" stroke="#222" stroke-width="0.8"/>
<circle cx="598.4" cy="293.5" r="8.4" stroke="#222" stroke-width="0.8"/>
<circle cx="598.4" cy="293.5" r="5.6" stroke="#222" stroke-width="0.8"/>
<circle cx="598.4" cy="293.5" r="2.8" stroke="#222" stroke-width="0.8"/>
<path d="M598.40 293.50L608.75 297.79M598.40 293.50L602.69 303.85M598.40 293.50L594.11 303.85M598.40 293.50L588.05 297.79M598.40 293.50L588.05 289.21M598.40 293.50L594.11 283.15M598.40 293.50L602.69 283.15M598.40 293.50L608.75 289.21" stroke="#222" stroke-width="0.7"/>
</g>
<clipPath id="dk"><rect x="543" y="227" width="74" height="88"/></clipPath><g clip-path="url(#dk)" font-family="Liberation Sans" font-size="9" letter-spacing="-0.05" fill="#202020" text-anchor="middle"><text x="580" y="267.5">DAIKIN Altherma</text><text x="580" y="280">3 R ERGA04-DV %</text></g>
<rect x="539.3" y="223.3" width="7" height="7" fill="#fff" stroke="#9a9a9a" stroke-width="0.8"/>
<rect x="539.3" y="267.5" width="7" height="7" fill="#fff" stroke="#9a9a9a" stroke-width="0.8"/>
<rect x="539.3" y="311.3" width="7" height="7" fill="#fff" stroke="#9a9a9a" stroke-width="0.8"/>
<rect x="576.5" y="223.3" width="7" height="7" fill="#fff" stroke="#9a9a9a" stroke-width="0.8"/>
<rect x="576.5" y="311.3" width="7" height="7" fill="#fff" stroke="#9a9a9a" stroke-width="0.8"/>
<rect x="613.3" y="223.3" width="7" height="7" fill="#fff" stroke="#9a9a9a" stroke-width="0.8"/>
<rect x="613.3" y="267.5" width="7" height="7" fill="#fff" stroke="#9a9a9a" stroke-width="0.8"/>
<rect x="613.3" y="311.3" width="7" height="7" fill="#fff" stroke="#9a9a9a" stroke-width="0.8"/>
<rect x="691.5" y="228.5" width="48" height="86" fill="#fff" fill-opacity="0.6" stroke="#333" stroke-width="1.1"/>
<path d="M708 228.3H722" stroke="#333" stroke-width="1.6"/>
<rect x="695.5" y="245.5" width="39" height="6" fill="#6e6e6e"/>
<rect x="699.5" y="242.5" width="31.5" height="11.5" rx="1.5" fill="none" stroke="#222" stroke-width="1"/>
<rect x="709.5" y="284.5" width="11" height="4.5" fill="#fff" stroke="#333" stroke-width="1"/>
<rect x="704.5" y="297.5" width="21.5" height="8" rx="1" fill="#eee" stroke="#222" stroke-width="1.1"/><path d="M708 301.5h14" stroke="#555" stroke-width="2"/>
<g font-family="Liberation Sans" font-size="9" letter-spacing="-0.5" fill="#202020" text-anchor="middle"><text x="715.3" y="261.5">VITODENS</text><text x="715.3" y="273.5">343-F B3UA</text><text x="715.3" y="285.5">16,7 kW</text></g>
<path d="M550.8 315V343M550.8 343V365M550.8 381V426.2H485.5V437M564.6 315V341.5H567.3V365M567.3 381V467.4H677M695.9 315V335.2H690.2V358.5M690.2 374.5V443M705.4 315V335.2H706.8V358.5M706.8 374.5V426.5H694.7A4.5 4.5 0 0 0 685.7 426.5H676.5V456.8H677M532 443.2H562.8A4.5 4.5 0 0 1 571.8 443.2H672.0A4.5 4.5 0 0 1 681.0 443.2H682M487.5 445.5V489.3H475M747.5 522.7H774.7V594.2H783" stroke="#2a2a2a" stroke-width="1.1" fill="none"/>
<path d="M547.5 351.0H554.0999999999999L550.8 356.0zM564.0 351.0H570.5999999999999L567.3 356.0zM686.9000000000001 344.5H693.5L690.2 349.5zM703.5 344.5H710.0999999999999L706.8 349.5zM482.2 437.5H488.8L485.5 442.5zM677 453.5V460.1L682 456.8zM677 464.09999999999997V470.7L682 467.4zM783.4 590.9000000000001V597.5L788.4 594.2zM532.5 439.9V446.5L527.5 443.2zM474.5 486.0V492.6L469.5 489.3z" fill="#111"/>
<path d="M547.3 357H554.3M563.8 357H570.8M686.7 351H693.7M703.3 351H710.3M547.3 389H554.3M563.8 389H570.8M686.7 382.5H693.7M703.3 382.5H710.3" stroke="#8a8a8a" stroke-width="1"/>
<circle cx="550.8" cy="373" r="8" fill="#fff" stroke="#222" stroke-width="1"/>
<path d="M543.9 369H557.6999999999999L550.8 381z" fill="#f00" stroke="#222" stroke-width="0.8"/>
<circle cx="567.3" cy="373" r="8" fill="#fff" stroke="#222" stroke-width="1"/>
<path d="M560.4 369H574.1999999999999L567.3 381z" fill="#f00" stroke="#222" stroke-width="0.8"/>
<circle cx="690.2" cy="366.5" r="8" fill="#fff" stroke="#222" stroke-width="1"/>
<path d="M683.3000000000001 362.5H697.1L690.2 374.5z" fill="#f00" stroke="#222" stroke-width="0.8"/>
<circle cx="706.8" cy="366.5" r="8" fill="#fff" stroke="#222" stroke-width="1"/>
<path d="M699.9 362.5H713.6999999999999L706.8 374.5z" fill="#f00" stroke="#222" stroke-width="0.8"/>
<rect x="486" y="440.5" width="40.3" height="5" fill="#fff" stroke="#111" stroke-width="1.5"/>
<path d="M490 445.5C500 443 512 441 522 440.5M492 445.5C505 442 515 441 524 440.5" stroke="#111" stroke-width="1" fill="none"/>
<path d="M682.8 539.5V445.6Q715 436 747.3 445.6V539.5" fill="#fff" fill-opacity="0.3" stroke="#222" stroke-width="1.1"/>
<path d="M683.3 446H746.8" stroke="#ff5a5a" stroke-width="1.3"/>
<rect x="683" y="528.3" width="64" height="11.5" fill="#ffb0b0"/>
<path d="M683 528.8H747M683 531.5H747M683 534H747M683 537H747M683 539.3H747" stroke="#ff3a3a" stroke-width="0.9"/>
<path d="M682.8 540.5Q715 551 747.3 540.5" fill="none" stroke="#222" stroke-width="1.1"/>
<path d="M693.4 543.3V549.4H736.6V543.3" fill="none" stroke="#222" stroke-width="1.1"/>
<text x="715" y="498.5" font-family="Liberation Sans" font-size="9" letter-spacing="-0.05" fill="#202020" text-anchor="middle">Accumulo 300L</text>
<rect x="370.5" y="477.5" width="98.7" height="24.2" fill="#fff" stroke="#333" stroke-width="1.1"/>
<text x="420" y="492.5" font-family="Liberation Sans" font-size="9" letter-spacing="-0.05" fill="#202020" text-anchor="middle">Impianto Riscaldamento</text>
<rect x="788.5" y="581.7" width="99" height="24.8" fill="#fff" stroke="#333" stroke-width="1.1"/>
<text x="838" y="596.8" font-family="Liberation Sans" font-size="9" letter-spacing="-0.05" fill="#202020" text-anchor="middle">Impianto A.C.S.</text>
</g>
</svg>
<div class="a" style="left:996px;top:158px;width:17px;height:18px;background:#fff;border:1px solid #adadad"></div>
<svg class="a" style="left:1001px;top:164px" width="7" height="4" viewBox="0 0 7 4"><path d="M0 4L3.5 0 7 4z" fill="#707070"/></svg>
<div class="a" style="left:996px;top:757px;width:17px;height:17px;background:#fff;border:1px solid #adadad"></div>
<svg class="a" style="left:1001px;top:763px" width="7" height="4" viewBox="0 0 7 4"><path d="M0 0L3.5 4 7 0z" fill="#707070"/></svg>
<div class="a" style="left:996px;top:342px;width:17px;height:162px;background:#fff;border:1px solid #adadad"></div>
<div class="a" style="left:307px;top:775px;width:18px;height:17px;background:#fff;border:1px solid #adadad"></div>
<svg class="a" style="left:314px;top:780px" width="4" height="7" viewBox="0 0 4 7"><path d="M4 0L0 3.5 4 7z" fill="#707070"/></svg>
<div class="a" style="left:977px;top:775px;width:18px;height:17px;background:#fff;border:1px solid #adadad"></div>
<svg class="a" style="left:984px;top:780px" width="4" height="7" viewBox="0 0 4 7"><path d="M0 0L4 3.5 0 7z" fill="#707070"/></svg>
<div class="a" style="left:480px;top:775px;width:152px;height:17px;background:#fff;border:1px solid #adadad"></div>
<!-- RIGHT PANEL -->
<div class="a" style="left:1016px;top:159px;width:287px;height:633px;background:#f7f7f7;border:1px solid #d9d9d9"></div>
<div class="t" style="left:1027.5px;top:171.5px;font-size:20.3px;letter-spacing:0;line-height:22px;color:#3c3c3c;letter-spacing:-0.2px">Dati pompa di calore</div>
<svg class="a" style="left:1241px;top:176px" width="10" height="12" viewBox="0 0 10 12"><path d="M2.5 .5h5M3.5 .5v5M6.5 .5v5M1 5.5h8M5 5.5v6" fill="none" stroke="#555" stroke-width="1"/></svg>
<svg class="a" style="left:1275px;top:177px" width="10" height="10" viewBox="0 0 10 10"><path d="M.5 .5l9 9M9.5 .5l-9 9" stroke="#555" stroke-width="1.1"/></svg>
<div class="a" style="left:1018px;top:206px;width:283px;height:584px;background:#fff;border:1px solid #b9b9b9;border-top-color:#c8c8c8;border-right-color:#d0d0d0"></div>
<div class="a" style="left:1019px;top:206.6px;width:138.5px;height:18.1px;background:#e6e6e6"></div>
<div class="a" style="left:1019.0px;top:223.7px;width:282.0px;height:1px;background:#dcdcdc"></div>
<div class="a" style="left:1157.5px;top:206.6px;width:1px;height:18.1px;background:#dcdcdc"></div>
<div class="t" style="left:1042.5px;top:210.4px;color:#3c3c3c;letter-spacing:-0.2px">Descrizione</div>
<div class="t" style="left:1162px;top:210.4px;color:#3c3c3c;letter-spacing:-0.2px">DAIKIN Altherma 3 R ER...</div>
<div class="a" style="left:1019.0px;top:241.8px;width:282.0px;height:1px;background:#dcdcdc"></div>
<div class="a" style="left:1157.5px;top:224.7px;width:1px;height:18.1px;background:#dcdcdc"></div>
<div class="t" style="left:1042.5px;top:228.5px;color:#3c3c3c;letter-spacing:-0.2px">Tipo Alimentazione</div>
<div class="t" style="left:1162px;top:228.5px;color:#3c3c3c;letter-spacing:-0.2px">PdC o Chiller</div>
<svg class="a" style="left:1288px;top:232.2px" width="7" height="4" viewBox="0 0 7 4"><path d="M.5 .5h6L3.5 3.5z" fill="#777"/></svg>
<div class="a" style="left:1019.0px;top:259.9px;width:282.0px;height:1px;background:#dcdcdc"></div>
<div class="a" style="left:1157.5px;top:242.8px;width:1px;height:18.1px;background:#dcdcdc"></div>
<div class="t" style="left:1042.5px;top:246.6px;color:#3c3c3c;letter-spacing:-0.2px">Modello</div>
<div class="t" style="left:1162px;top:246.6px;color:#3c3c3c;letter-spacing:-0.2px">DAIKIN Altherma ...</div>
<svg class="a" style="left:1273px;top:250.3px" width="7" height="4" viewBox="0 0 7 4"><path d="M.5 .5h6L3.5 3.5z" fill="#777"/></svg>
<div class="a" style="left:1288px;top:250.8px;width:2px;height:2px;background:#555;box-shadow:3px 0 #555,6px 0 #555"></div>
<div class="a" style="left:1019.0px;top:278.0px;width:282.0px;height:1px;background:#dcdcdc"></div>
<div class="a" style="left:1157.5px;top:260.9px;width:1px;height:18.1px;background:#dcdcdc"></div>
<div class="t" style="left:1042.5px;top:264.7px;color:#3c3c3c;letter-spacing:-0.2px">Codice catastale</div>
<div class="a" style="left:1019.0px;top:296.1px;width:282.0px;height:1px;background:#dcdcdc"></div>
<div class="a" style="left:1157.5px;top:279.0px;width:1px;height:18.1px;background:#dcdcdc"></div>
<div class="t" style="left:1042.5px;top:282.8px;color:#3c3c3c;letter-spacing:-0.2px">Anno d'installazione</div>
<div class="a" style="left:1019.0px;top:314.2px;width:282.0px;height:1px;background:#dcdcdc"></div>
<div class="a" style="left:1157.5px;top:297.1px;width:1px;height:18.1px;background:#dcdcdc"></div>
<div class="t" style="left:1042.5px;top:300.9px;color:#3c3c3c;letter-spacing:-0.2px">Potenza nominale (st...</div>
<div class="t" style="left:1162px;top:300.9px;color:#3c3c3c;letter-spacing:-0.2px">0.0</div>
<div class="a" style="left:1019.0px;top:332.3px;width:282.0px;height:1px;background:#dcdcdc"></div>
<div class="a" style="left:1157.5px;top:315.2px;width:1px;height:18.1px;background:#dcdcdc"></div>
<div class="t" style="left:1042.5px;top:319.0px;color:#3c3c3c;letter-spacing:-0.2px">Priorità</div>
<div class="t" style="left:1162px;top:319.0px;color:#3c3c3c;letter-spacing:-0.2px">0</div>
<div class="a" style="left:1019.0px;top:350.4px;width:282.0px;height:1px;background:#dcdcdc"></div>
<div class="a" style="left:1157.5px;top:333.3px;width:1px;height:18.1px;background:#dcdcdc"></div>
<div class="t" style="left:1042.5px;top:337.1px;color:#3c3c3c;letter-spacing:-0.2px">Posizione del generat...</div>
<svg class="a" style="left:1162px;top:338.3px" width="10" height="8" viewBox="0 0 10 8"><path d="M1 4h6M1 6.5h6" stroke="#1a2a9a" stroke-width="1.3"/><path d="M8 1v1M9.5 .5v1" stroke="#555" stroke-width=".8"/></svg>
<div class="t" style="left:1177px;top:337.1px;color:#3c3c3c;letter-spacing:-0.2px">In centrale termica</div>
<svg class="a" style="left:1288px;top:340.8px" width="7" height="4" viewBox="0 0 7 4"><path d="M.5 .5h6L3.5 3.5z" fill="#777"/></svg>
<div class="a" style="left:1019.0px;top:368.5px;width:282.0px;height:1px;background:#dcdcdc"></div>
<div class="a" style="left:1157.5px;top:351.4px;width:1px;height:18.1px;background:#dcdcdc"></div>
<div class="t" style="left:1042.5px;top:355.2px;color:#3c3c3c;letter-spacing:-0.2px">Temperatura locale [...</div>
<div class="t" style="left:1162px;top:355.2px;color:#3c3c3c;letter-spacing:-0.2px">15.00</div>
<div class="a" style="left:1019.0px;top:369.5px;width:282.0px;height:18.1px;background:#f5f5f5"></div>
<div class="t" style="left:1042.5px;top:373.3px;font-weight:bold;letter-spacing:0.25px;color:#3c3c3c;letter-spacing:-0.2px">Temperature del fluido vettore</div>
<svg class="a" style="left:1280px;top:374.5px" width="14" height="8" viewBox="0 0 14 8"><path d="M.5 7.5L7 1l6.5 6.5" fill="none" stroke="#555" stroke-width="1.1"/></svg>
<div class="a" style="left:1039.5px;top:387.6px;width:1px;height:18.1px;background:#dcdcdc"></div>
<div class="a" style="left:1039.5px;top:404.7px;width:261.5px;height:1px;background:#dcdcdc"></div>
<div class="a" style="left:1157.5px;top:387.6px;width:1px;height:18.1px;background:#dcdcdc"></div>
<div class="t" style="left:1064.0px;top:391.4px;color:#3c3c3c;letter-spacing:-0.2px">Metodo di calcolo</div>
<div class="t" style="left:1162px;top:391.4px;color:#3c3c3c;letter-spacing:-0.2px">Temperatura media p...</div>
<svg class="a" style="left:1288px;top:395.1px" width="7" height="4" viewBox="0 0 7 4"><path d="M.5 .5h6L3.5 3.5z" fill="#777"/></svg>
<div class="a" style="left:1039.5px;top:405.7px;width:261.5px;height:18.1px;background:#f5f5f5"></div>
<div class="t" style="left:1064.0px;top:409.5px;font-weight:bold;letter-spacing:0.25px;color:#3c3c3c;letter-spacing:-0.2px">Riscaldamento</div>
<svg class="a" style="left:1280px;top:410.7px" width="14" height="8" viewBox="0 0 14 8"><path d="M.5 7.5L7 1l6.5 6.5" fill="none" stroke="#555" stroke-width="1.1"/></svg>
<div class="a" style="left:1061px;top:423.8px;width:1px;height:18.1px;background:#dcdcdc"></div>
<div class="a" style="left:1061px;top:440.9px;width:240px;height:1px;background:#dcdcdc"></div>
<div class="a" style="left:1157.5px;top:423.8px;width:1px;height:18.1px;background:#dcdcdc"></div>
<div class="t" style="left:1085.5px;top:427.6px;color:#3c3c3c;letter-spacing:-0.2px">Temp. man...</div>
<div class="t" style="left:1162px;top:427.6px;color:#3c3c3c;letter-spacing:-0.2px">45.00</div>
<div class="a" style="left:1061px;top:441.9px;width:1px;height:18.1px;background:#dcdcdc"></div>
<div class="a" style="left:1061px;top:459.0px;width:240px;height:1px;background:#dcdcdc"></div>
<div class="a" style="left:1157.5px;top:441.9px;width:1px;height:18.1px;background:#dcdcdc"></div>
<div class="t" style="left:1085.5px;top:445.7px;color:#3c3c3c;letter-spacing:-0.2px">Temp. Ritor...</div>
<div class="t" style="left:1162px;top:445.7px;color:#3c3c3c;letter-spacing:-0.2px">35.00</div>
<div class="a" style="left:1019px;top:369.5px;width:20.5px;height:90.5px;background:#f5f5f5"></div>
<div class="a" style="left:1039.5px;top:387.6px;width:1px;height:72px;background:#dcdcdc"></div>
<div class="a" style="left:1040.5px;top:423.8px;width:20.5px;height:36.2px;background:#f5f5f5"></div>
<div class="a" style="left:1019px;top:459.0px;width:282px;height:1px;background:#dcdcdc"></div>
<!-- BOTTOM -->
<div class="a" style="left:1px;top:794px;width:1303px;height:28px;background:#f7f7f7"></div>
<div class="t" style="left:16px;top:803.5px;color:#333">Warning</div>
<div class="a" style="left:1px;top:821px;width:1303px;height:1px;background:#dadada"></div>
<div class="a" style="left:1px;top:822px;width:1303px;height:21px;background:#efefef"></div>
<svg class="a" style="left:1288px;top:828px" width="12" height="12" viewBox="0 0 12 12"><g fill="#a0a0a0"><rect x="9" y="1" width="2" height="2"/><rect x="6" y="4" width="2" height="2"/><rect x="9" y="4" width="2" height="2"/><rect x="3" y="7" width="2" height="2"/><rect x="6" y="7" width="2" height="2"/><rect x="9" y="7" width="2" height="2"/><rect x="0" y="10" width="2" height="2"/><rect x="3" y="10" width="2" height="2"/><rect x="6" y="10" width="2" height="2"/><rect x="9" y="10" width="2" height="2"/></g></svg>
</body></html>
